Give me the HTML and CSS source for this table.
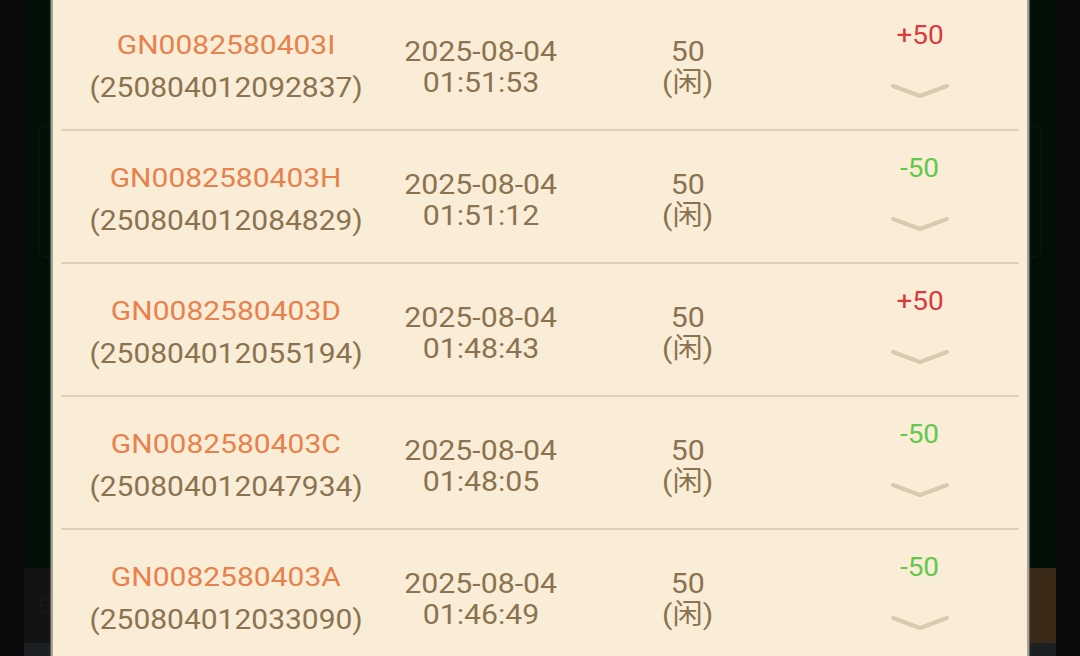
FILE: index.html
```html
<!DOCTYPE html>
<html lang="zh">
<head>
<meta charset="utf-8">
<title>Records</title>
<link rel="stylesheet" href="styles.css">
</head>
<body>
<div class="app">
  <div class="stage">
    <div class="ghost-card"></div>
  </div>
  <div class="bottom-bar"><span class="bar-label">E</span></div>
  <div class="nav"></div>

  <div class="modal">
    <div class="list">
      <div class="row">
        <div class="cell c-id"><span class="gn">GN0082580403I</span><span class="oid">(250804012092837)</span></div>
        <div class="cell c-time"><span class="dt">2025-08-04</span><span class="dt">01:51:53</span></div>
        <div class="cell c-bet"><span class="dt">50</span><span class="dt">(闲)</span></div>
        <div class="cell c-res"><span class="amt win">+50</span><svg class="chev" viewBox="0 0 60 18" width="60" height="18"><polyline points="3,4 30,14 57,4"/></svg></div>
      </div>
      <div class="row">
        <div class="cell c-id"><span class="gn">GN0082580403H</span><span class="oid">(250804012084829)</span></div>
        <div class="cell c-time"><span class="dt">2025-08-04</span><span class="dt">01:51:12</span></div>
        <div class="cell c-bet"><span class="dt">50</span><span class="dt">(闲)</span></div>
        <div class="cell c-res"><span class="amt lose">-50</span><svg class="chev" viewBox="0 0 60 18" width="60" height="18"><polyline points="3,4 30,14 57,4"/></svg></div>
      </div>
      <div class="row">
        <div class="cell c-id"><span class="gn">GN0082580403D</span><span class="oid">(250804012055194)</span></div>
        <div class="cell c-time"><span class="dt">2025-08-04</span><span class="dt">01:48:43</span></div>
        <div class="cell c-bet"><span class="dt">50</span><span class="dt">(闲)</span></div>
        <div class="cell c-res"><span class="amt win">+50</span><svg class="chev" viewBox="0 0 60 18" width="60" height="18"><polyline points="3,4 30,14 57,4"/></svg></div>
      </div>
      <div class="row">
        <div class="cell c-id"><span class="gn">GN0082580403C</span><span class="oid">(250804012047934)</span></div>
        <div class="cell c-time"><span class="dt">2025-08-04</span><span class="dt">01:48:05</span></div>
        <div class="cell c-bet"><span class="dt">50</span><span class="dt">(闲)</span></div>
        <div class="cell c-res"><span class="amt lose">-50</span><svg class="chev" viewBox="0 0 60 18" width="60" height="18"><polyline points="3,4 30,14 57,4"/></svg></div>
      </div>
      <div class="row">
        <div class="cell c-id"><span class="gn">GN0082580403A</span><span class="oid">(250804012033090)</span></div>
        <div class="cell c-time"><span class="dt">2025-08-04</span><span class="dt">01:46:49</span></div>
        <div class="cell c-bet"><span class="dt">50</span><span class="dt">(闲)</span></div>
        <div class="cell c-res"><span class="amt lose">-50</span><svg class="chev" viewBox="0 0 60 18" width="60" height="18"><polyline points="3,4 30,14 57,4"/></svg></div>
      </div>
    </div>
  </div>
</div>
</body>
</html>
```
FILE: styles.css
```css
html, body {
  margin: 0;
  padding: 0;
}
body {
  background: #0b0b0b;
  height: 656px;
  overflow: hidden;
  font-family: Roboto, "Noto Sans CJK SC", sans-serif;
}
.app {
  position: relative;
  margin: 0 24px;
  height: 656px;
  display: flex;
  flex-direction: column;
}
.stage {
  height: 568px;
  background: #020f06;
  padding-top: 125px;
  box-sizing: border-box;
}
.ghost-card {
  margin: 0 14px;
  height: 130px;
  border: 1px solid #0a1b10;
  border-radius: 8px;
}
.bottom-bar {
  height: 75px;
  background: linear-gradient(90deg, #121212 0%, #1c1813 50%, #3a2a17 100%);
  display: flex;
  align-items: center;
  padding-left: 14px;
}
.bar-label {
  color: #171717;
  font-size: 22px;
}
.nav {
  flex: 1;
  background: #1c1f22;
}
.modal {
  position: absolute;
  top: 0;
  bottom: 0;
  left: 27px;
  right: 27px;
  background: #f9edd8;
  border-left: 2px solid #a8a398;
  border-right: 2px solid #a8a398;
  box-shadow: -1px 0 1px rgba(120,120,110,0.6), 1px 0 1px rgba(120,120,110,0.6);
  overflow: hidden;
}
.list {
  margin-top: -2px;
  padding: 0 8px;
}
.row {
  display: grid;
  grid-template-columns: 330px 180px 234px 1fr;
  height: 125px;
  padding-top: 6px;
  box-sizing: content-box;
  border-bottom: 2px solid #ddd0b5;
}
.cell {
  display: flex;
  flex-direction: column;
  align-items: center;
  justify-content: center;
  color: #8c7350;
}
.gn {
  display: inline-block;
  font-size: 25px;
  line-height: 42px;
  color: #e8814b;
  transform: scaleX(1.2);
}
.oid {
  display: inline-block;
  font-size: 27px;
  line-height: 42px;
  transform: scaleX(1.11);
}
.dt {
  display: inline-block;
  font-size: 28px;
  line-height: 31px;
  transform: scaleX(1.08);
}
.c-res {
  justify-content: flex-start;
  padding-left: 16px;
  padding-top: 17px;
}
.amt {
  display: inline-block;
  font-size: 25px;
  line-height: 30px;
  transform: scaleX(1.12);
}
.win { color: #d93a3e; }
.lose { color: #62c84a; }
.chev {
  margin-top: 31px;
  display: block;
}
.chev polyline {
  fill: none;
  stroke: #d7caaf;
  stroke-width: 4;
  stroke-linecap: round;
  stroke-linejoin: round;
}
```
